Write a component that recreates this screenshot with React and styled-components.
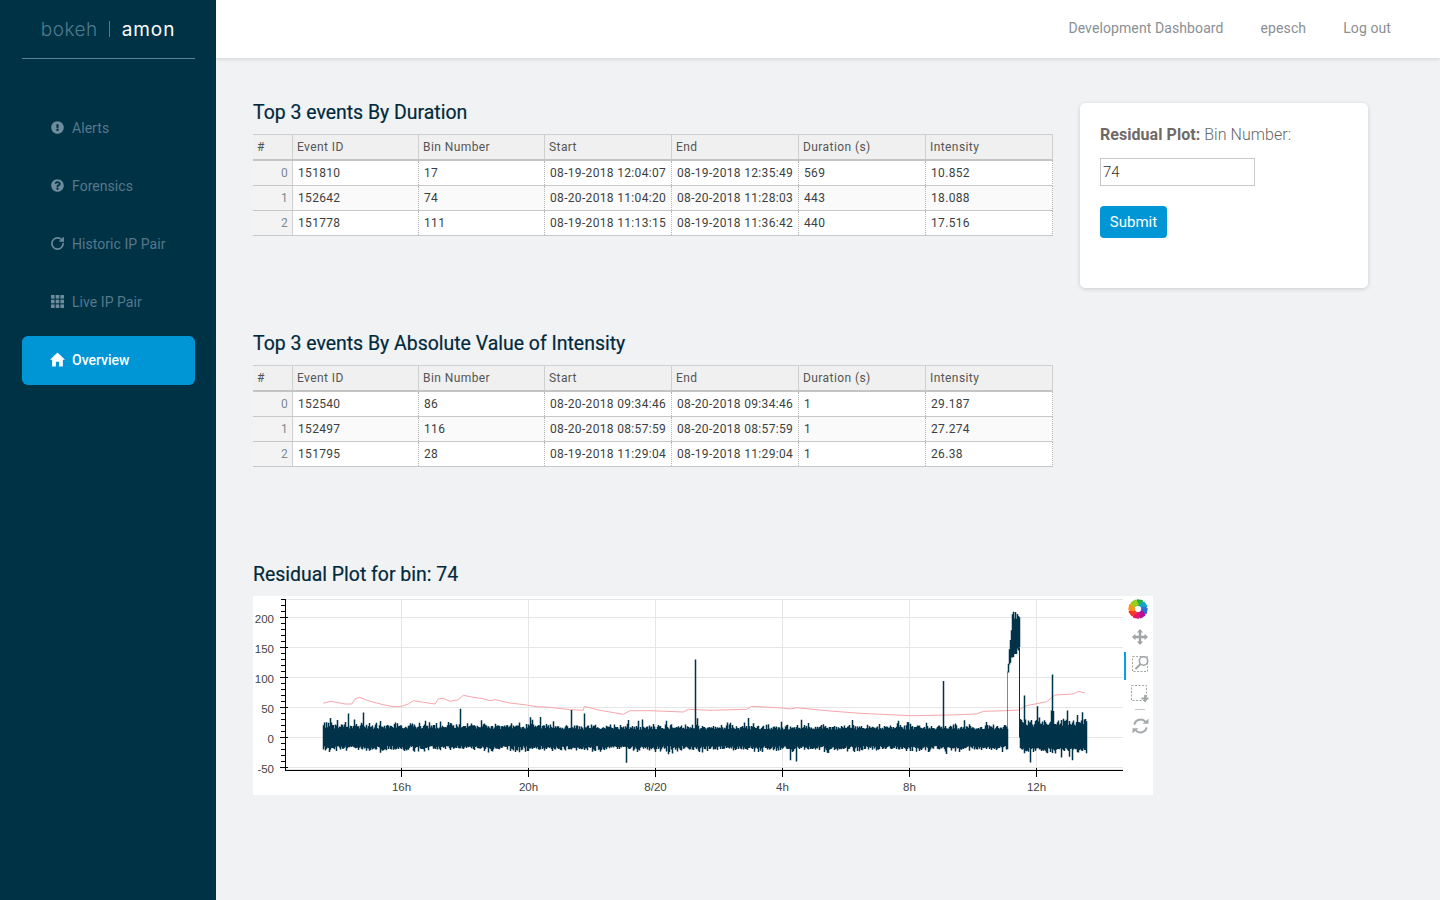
import React from "react";
import styled, { createGlobalStyle } from "styled-components";
import { RotateCw } from "lucide-react";
import { FaExclamationCircle, FaQuestionCircle } from "react-icons/fa";

const GlobalStyle = createGlobalStyle`
  html, body {
    margin: 0;
    padding: 0;
    height: 100%;
    background: #f1f2f4;
    font-family: Roboto, "Liberation Sans", sans-serif;
  }
  * { box-sizing: border-box; }
`;

const Page = styled.div`
  display: flex;
  width: 1440px;
  height: 900px;
  overflow: hidden;
`;

const Sidebar = styled.aside`
  flex: 0 0 216px;
  display: flex;
  flex-direction: column;
  background: #003246;
  padding: 0 21px 0 22px;
`;

const Logo = styled.div`
  height: 59px;
  display: flex;
  align-items: center;
  justify-content: center;
  border-bottom: 1px solid #5b8296;
  font-family: Inter, sans-serif;
  font-size: 19px;
  letter-spacing: 0.3px;
  padding-right: 1px;
`;

const LogoBokeh = styled.span`
  color: #4f7a8e;
  font-weight: 300;
  letter-spacing: 0.5px;
`;

const LogoBar = styled.span`
  width: 1px;
  height: 16px;
  margin: 0 12px 0 11px;
  background: #4f7a8e;
`;

const LogoAmon = styled.span`
  color: #ffffff;
  font-weight: 400;
  letter-spacing: 0.9px;
`;

const NavList = styled.nav`
  display: flex;
  flex-direction: column;
  gap: 9px;
  margin-top: 45px;
`;

const NavItem = styled.a`
  height: 49px;
  display: flex;
  align-items: center;
  gap: ${(p) => (p.$bigIcon ? 7 : 8)}px;
  padding-left: ${(p) => (p.$bigIcon ? 28 : 29)}px;
  padding-bottom: 2px;
  border-radius: 6px;
  font-size: 14px;
  letter-spacing: ${(p) => (p.$active ? 0 : 0.05)}px;
  font-weight: ${(p) => (p.$active ? 500 : 400)};
  color: ${(p) => (p.$active ? "#ffffff" : "#56788a")};
  background: ${(p) => (p.$active ? "#0096d6" : "transparent")};

  svg {
    flex: none;
    width: ${(p) => (p.$bigIcon ? 15 : 13)}px;
    height: ${(p) => (p.$bigIcon ? 15 : 13)}px;
    color: ${(p) => (p.$active ? "#ffffff" : "#6d8c9c")};
  }
`;

const Content = styled.div`
  flex: 1;
  display: flex;
  flex-direction: column;
  min-width: 0;
`;

const Navbar = styled.header`
  height: 58px;
  display: flex;
  align-items: center;
  justify-content: flex-end;
  gap: 37px;
  padding: 0 49px 2px 0;
  background: #ffffff;
  box-shadow: 0 1px 4px rgba(0, 0, 0, 0.14);
`;

const TopLink = styled.a`
  font-size: 14px;
  letter-spacing: 0.1px;
  color: #8a8f93;
`;

const Main = styled.main`
  padding: 44px 0 0 37px;
`;

const TopRow = styled.div`
  display: flex;
  align-items: flex-start;
  gap: 27px;
`;

const Section = styled.section`
  width: ${(p) => p.$width || 800}px;
  margin-bottom: 97px;
`;

const Title = styled.h2`
  margin: 0 0 10px;
  height: 22px;
  font-size: 19.45px;
  line-height: 22px;
  font-weight: 400;
  color: #00293c;
  -webkit-text-stroke: 0.2px #00293c;
`;

const Grid = styled.div`
  width: 800px;
  font-size: 12px;
  letter-spacing: 0.33px;
  color: #3c3f41;
`;

const columns = "40px 126px 126px 127px 127px 127px 127px";

const HeadRow = styled.div`
  display: grid;
  grid-template-columns: ${columns};
  height: 27px;
  background: #f0f0f0;
  border-top: 1px solid #cfcfcf;
  border-bottom: 2px solid #c4c4c4;
  border-right: 1px solid #cfcfcf;
  letter-spacing: 0.42px;
`;

const HeadCell = styled.div`
  display: flex;
  align-items: center;
  padding-left: 4px;
  color: #555;
  border-right: 1px solid #cfcfcf;

  &:last-child {
    border-right: 0;
  }
`;

const Row = styled.div`
  display: grid;
  grid-template-columns: ${columns};
  height: 25px;
  background: ${(p) => (p.$odd ? "#fafafa" : "#ffffff")};
  border-bottom: 1px solid #c8c8c8;
  border-right: 1px dotted #b4b4b4;
`;

const IndexCell = styled.div`
  display: flex;
  align-items: center;
  justify-content: flex-end;
  padding-right: 4px;
  background: #f3f3f4;
  color: #7c8a93;
  border-right: 1px solid #cfcfcf;
`;

const Cell = styled.div`
  display: flex;
  align-items: center;
  padding-left: 5px;
  white-space: nowrap;
  border-right: 1px dotted #b4b4b4;

  &:last-child {
    border-right: 0;
  }
`;

const Card = styled.div`
  width: 288px;
  height: 185px;
  margin-top: 1px;
  padding: 23px 20px;
  background: #ffffff;
  border-radius: 5px;
  box-shadow: 0 1px 4px rgba(0, 0, 0, 0.16);
`;

const FormLabel = styled.div`
  font-size: 16px;
  line-height: 18px;
  font-weight: 300;
  letter-spacing: 0.05px;
  color: #666;

  b {
    font-weight: 700;
    color: #6f6a66;
  }
`;

const NumberInput = styled.input`
  display: block;
  width: 155px;
  height: 28px;
  margin: 14px 0 20px;
  padding: 0 2px;
  border: 1px solid #c9c9c9;
  border-radius: 0;
  font-family: Roboto, sans-serif;
  font-size: 15px;
  font-weight: 300;
  color: #333;
  outline: none;
`;

const SubmitButton = styled.button`
  display: block;
  width: 67px;
  height: 32px;
  padding: 0;
  border: 0;
  border-radius: 4px;
  background: #0096d6;
  color: #ffffff;
  font-family: Roboto, sans-serif;
  font-size: 15px;
`;

const PlotBox = styled.div`
  display: flex;
  width: 900px;
  height: 199px;
  margin-top: 1px;
  background: #ffffff;
`;

const ToolBar = styled.div`
  position: relative;
  flex: 0 0 30px;
  display: flex;
  flex-direction: column;
  align-items: center;
`;

const ToolIcon = styled.svg`
  display: block;
  flex: none;
  margin-top: ${(p) => p.$top}px;
  margin-left: ${(p) => p.$left || 0}px;
`;

const ActiveMark = styled.div`
  position: absolute;
  left: 1px;
  top: 56px;
  width: 2px;
  height: 28px;
  background: #00a4e0;
`;

const ToolSeparator = styled.div`
  flex: none;
  width: 10px;
  height: 1px;
  margin: 6px 0 0 4px;
  background: #c8c8c8;
`;

const durationRows = [
  ["151810", "17", "08-19-2018 12:04:07", "08-19-2018 12:35:49", "569", "10.852"],
  ["152642", "74", "08-20-2018 11:04:20", "08-20-2018 11:28:03", "443", "18.088"],
  ["151778", "111", "08-19-2018 11:13:15", "08-19-2018 11:36:42", "440", "17.516"],
];

const intensityRows = [
  ["152540", "86", "08-20-2018 09:34:46", "08-20-2018 09:34:46", "1", "29.187"],
  ["152497", "116", "08-20-2018 08:57:59", "08-20-2018 08:57:59", "1", "27.274"],
  ["151795", "28", "08-19-2018 11:29:04", "08-19-2018 11:29:04", "1", "26.38"],
];

const headers = ["#", "Event ID", "Bin Number", "Start", "End", "Duration (s)", "Intensity"];

const EventTable = ({ rows }) => (
  <Grid>
    <HeadRow>
      {headers.map((h) => (
        <HeadCell key={h}>{h}</HeadCell>
      ))}
    </HeadRow>
    {rows.map((row, i) => (
      <Row key={row[0]} $odd={i % 2 === 1}>
        <IndexCell>{i}</IndexCell>
        {row.map((v, j) => (
          <Cell key={j}>{v}</Cell>
        ))}
      </Row>
    ))}
  </Grid>
);

const GridGlyph = () => (
  <svg viewBox="0 0 13 13" fill="currentColor">
    {[0, 4.7, 9.4].map((y) =>
      [0, 4.7, 9.4].map((x) => <rect key={`${x}-${y}`} x={x} y={y} width="3.6" height="3.6" />)
    )}
  </svg>
);

const HomeGlyph = () => (
  <svg viewBox="0 0 14 14" fill="currentColor">
    <path d="M7 .5L14 7.2H12V13.5H8.5V9.2H5.5V13.5H2V7.2H0Z" />
  </svg>
);

// plot coordinates are relative to the white box at 253,597
const OX = 253;
const OY = 597;
const yOf = (v) => 141.5 - v * 0.6;

const thresholdPoints = [
  [323.3, 704.3], [330, 702.3], [336.7, 703.3], [345, 705], [351.7, 705], [355, 700], [359.3, 698.3],
  [370, 702.3], [383.3, 705.7], [393.3, 707.7], [401.7, 707.3], [408.3, 705], [413.3, 701.7], [423.3, 703.3],
  [435, 705], [438.3, 700], [443.3, 699.3], [450, 702.3], [458.3, 700.7], [463.3, 696.3], [473.3, 698.3],
  [483.3, 699.7], [490, 701.7], [495, 700.7], [510, 704], [526.7, 706], [536.7, 707.7], [550, 708.3],
  [570, 710.7], [583.3, 711.3], [584.3, 707.3], [600, 711.3], [623.3, 715.3], [630, 711.7], [650, 711.7],
  [683.3, 713], [688.3, 710.3], [710, 711.3], [746.7, 710.3], [751.7, 707.3], [783.3, 709], [790, 710],
  [796.7, 708.7], [826.7, 711.7], [860, 714.3], [910, 716.7], [950, 716], [976.7, 715], [983.3, 712.3],
  [1006.7, 711.7], [1018.3, 711], [1026.7, 706.7], [1046.7, 702.7], [1055, 696], [1073.3, 695],
  [1078.3, 692.3], [1085, 694],
];

const spikes = {
  348: 40, 460: 48, 571: 46, 584: 40, 626: -42, 638: 28, 695: 130, 697: 32, 790: -38, 796: -40, 823: 22,
  943: 94, 1024: 70, 1037: 52, 1052: 105, 1067: 45, 1082: 42, 1072: -38, 1069: -32,
};

// small seeded generator so the noise stays the same between renders
const makeRandom = (seed) => () => {
  seed = (seed * 16807) % 2147483647;
  return seed / 2147483647;
};

const buildResidual = () => {
  const rnd = makeRandom(7321);
  let d = "";
  for (let x = 323; x <= 1086; x += 1) {
    if (x >= 1008 && x < 1020) continue;
    const right = x >= 1020;
    const loud = x < 560;
    let top = right ? 17 + rnd() * 13 : (loud ? 14 : 13) + rnd() * (loud ? 6 : 5);
    let bottom = (right ? -17 : -14) - rnd() * 6;
    if (rnd() > 0.5) top += rnd() * (loud ? 8 : 6);
    if (rnd() > 0.94) top += rnd() * (loud || right ? 18 : 13);
    if (rnd() > 0.6) bottom -= rnd() * 6;
    if (rnd() > 0.95) bottom -= rnd() * (right ? 16 : 10);
    const spike = spikes[x];
    if (spike > 0) top = spike;
    if (spike < 0) bottom = spike;
    d += `M${x - OX + 0.5} ${yOf(top).toFixed(1)}V${yOf(bottom).toFixed(1)}`;
  }
  // burst just before noon
  for (let x = 1008; x < 1020; x += 1) {
    const t = (x - 1008) / 12;
    const top = 122 + 82 * Math.min(1, t * 3) + rnd() * 14 - 7;
    const bottom = 118 + 34 * Math.min(1, t * 2) - rnd() * 14;
    d += `M${x - OX + 0.5} ${yOf(top).toFixed(1)}V${yOf(bottom).toFixed(1)}`;
  }
  return d;
};

const residualPath = buildResidual();
const thresholdPath = thresholdPoints.map(([x, y]) => `${(x - OX).toFixed(1)},${(y - OY).toFixed(1)}`).join(" ");

const yMajor = [200, 150, 100, 50, 0, -50];
const yMinor = [];
for (let v = -50; v <= 230; v += 10) yMinor.push(v);
const xMajor = [
  [148.5, "16h"],
  [275.5, "20h"],
  [402.5, "8/20"],
  [529.5, "4h"],
  [656.5, "8h"],
  [783.5, "12h"],
];

const ResidualChart = () => (
  <svg width="870" height="199" viewBox="0 0 870 199" style={{ display: "block", flex: "none" }}>
    <rect x="32.5" y="3.5" width="838" height="170" fill="none" stroke="#e6e6e6" />
    {yMajor.map((v) => (
      <line key={v} x1="33" x2="870" y1={yOf(v)} y2={yOf(v)} stroke="#e6e6e6" />
    ))}
    {xMajor.map(([x, t]) => (
      <line key={t} x1={x} x2={x} y1="3" y2="174" stroke="#e6e6e6" />
    ))}
    <polyline points={thresholdPath} fill="none" stroke="#f7a6ac" strokeWidth="1" />
    <path d={residualPath} stroke="#00334a" strokeWidth="1.5" fill="none" />
    <line x1="754.5" x2="754.5" y1={yOf(110)} y2={yOf(0)} stroke="#00334a" strokeOpacity="0.55" />
    <line x1="766.5" x2="766.5" y1={yOf(150)} y2={yOf(0)} stroke="#00334a" />
    <line x1="32.5" x2="32.5" y1="3" y2="174.5" stroke="#000" />
    <line x1="32" x2="870" y1="174.5" y2="174.5" stroke="#000" />
    {yMinor.map((v) => (
      <line key={v} x1="28" x2="33" y1={yOf(v)} y2={yOf(v)} stroke="#000" />
    ))}
    {yMajor.map((v) => (
      <g key={v}>
        <line x1="27" x2="35" y1={yOf(v)} y2={yOf(v)} stroke="#000" />
        <text x="21" y={yOf(v) + 5} textAnchor="end" fontSize="11.5" fontFamily="Liberation Sans, sans-serif" fill="#444">
          {v}
        </text>
      </g>
    ))}
    {xMajor.map(([x, t]) => (
      <g key={t}>
        <line x1={x} x2={x} y1="172" y2="181" stroke="#000" />
        <text x={x} y="195" textAnchor="middle" fontSize="11.5" fontFamily="Liberation Sans, sans-serif" fill="#444">
          {t}
        </text>
      </g>
    ))}
  </svg>
);

const logoColors = ["#1fb24b", "#14a6c8", "#2f6fd6", "#b0129a", "#e4166a", "#f43a22", "#f7931e", "#9ccc1c"];

const BokehLogo = () => (
  <ToolIcon width="20" height="20" viewBox="-10 -10 20 20" $top={3} $left={-1}>
    {logoColors.map((c, i) => (
      <rect key={c} x="-3" y="-9.5" width="6.6" height="6.4" rx="1" fill={c} transform={`rotate(${i * 45 + 10})`} />
    ))}
  </ToolIcon>
);

const PanIcon = () => (
  <ToolIcon width="16" height="16" viewBox="0 0 16 16" $top={10} $left={4} fill="#9fa4a7">
    <path d="M8 0l3.2 3.4H9.2V6.8H12.6V4.8L16 8l-3.4 3.2V9.2H9.2V12.6H11.2L8 16l-3.2-3.4H6.8V9.2H3.4V11.2L0 8l3.4-3.2V6.8H6.8V3.4H4.8z" />
  </ToolIcon>
);

const ZoomIcon = () => (
  <ToolIcon width="18" height="18" viewBox="0 0 18 18" $top={10} $left={6} fill="none">
    <rect x="0.5" y="1.5" width="15" height="15" stroke="#a5a5a5" strokeDasharray="2 1.5" />
    <circle cx="11.5" cy="6" r="4.2" fill="#fff" stroke="#9fa4a7" strokeWidth="1.6" />
    <path d="M8.5 9L3.5 14" stroke="#9fa4a7" strokeWidth="2" />
  </ToolIcon>
);

const SelectIcon = () => (
  <ToolIcon width="18" height="18" viewBox="0 0 18 18" $top={12} $left={4} fill="none">
    <rect x="0.5" y="0.5" width="15" height="15" stroke="#a5a5a5" strokeDasharray="2 1.5" />
    <path d="M10.5 13.5h7M14 10v7" stroke="#9fa4a7" strokeWidth="1.8" />
  </ToolIcon>
);

const ResetIcon = () => (
  <ToolIcon width="17" height="16" viewBox="0 0 16 16" $top={8} $left={4} fill="none" stroke="#a5aaad" strokeWidth="2">
    <path d="M1.8 6.6A6.4 6.4 0 0 1 12.8 3.6" />
    <path d="M14.2 9.4A6.4 6.4 0 0 1 3.2 12.4" />
    <path d="M10 5.8h6V0.8z" fill="#a5aaad" stroke="none" />
    <path d="M6 10.2H0v5z" fill="#a5aaad" stroke="none" />
  </ToolIcon>
);

const App = () => (
  <Page>
    <GlobalStyle />
    <Sidebar>
      <Logo>
        <LogoBokeh>bokeh</LogoBokeh>
        <LogoBar />
        <LogoAmon>amon</LogoAmon>
      </Logo>
      <NavList>
        <NavItem><FaExclamationCircle /> Alerts</NavItem>
        <NavItem><FaQuestionCircle /> Forensics</NavItem>
        <NavItem $bigIcon><RotateCw strokeWidth={2.6} /> Historic IP Pair</NavItem>
        <NavItem><GridGlyph /> Live IP Pair</NavItem>
        <NavItem $active $bigIcon><HomeGlyph /> Overview</NavItem>
      </NavList>
    </Sidebar>
    <Content>
      <Navbar>
        <TopLink>Development Dashboard</TopLink>
        <TopLink>epesch</TopLink>
        <TopLink>Log out</TopLink>
      </Navbar>
      <Main>
        <TopRow>
          <Section>
            <Title>Top 3 events By Duration</Title>
            <EventTable rows={durationRows} />
          </Section>
          <Card>
            <FormLabel><b>Residual Plot:</b> Bin Number:</FormLabel>
            <NumberInput defaultValue="74" />
            <SubmitButton>Submit</SubmitButton>
          </Card>
        </TopRow>
        <Section>
          <Title>Top 3 events By Absolute Value of Intensity</Title>
          <EventTable rows={intensityRows} />
        </Section>
        <Section $width={900}>
          <Title>Residual Plot for bin: 74</Title>
          <PlotBox>
            <ResidualChart />
            <ToolBar>
              <ActiveMark />
              <BokehLogo />
              <PanIcon />
              <ZoomIcon />
              <SelectIcon />
              <ToolSeparator />
              <ResetIcon />
            </ToolBar>
          </PlotBox>
        </Section>
      </Main>
    </Content>
  </Page>
);

export default App;
